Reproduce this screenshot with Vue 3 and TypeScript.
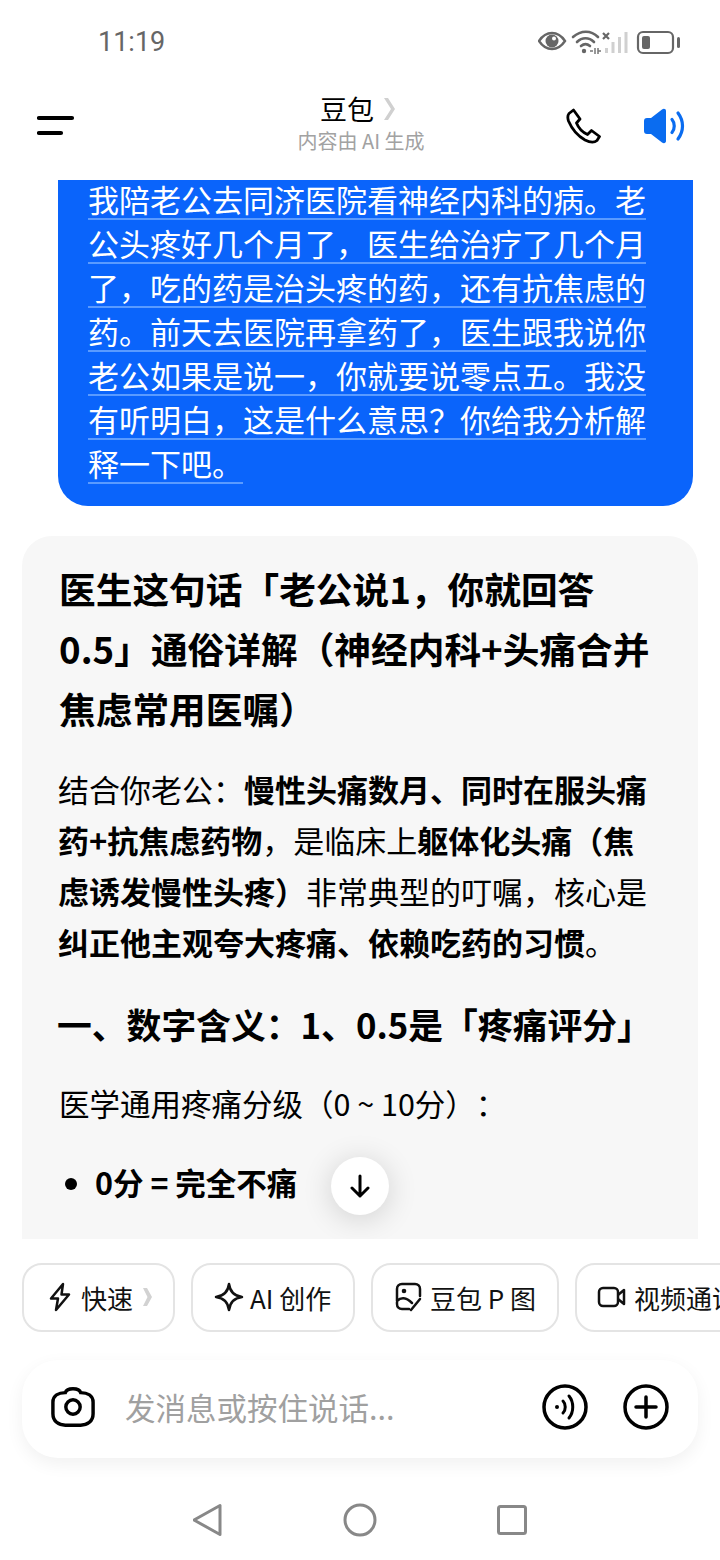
<script setup lang="ts">
const bubble: string = '我陪老公去同济医院看神经内科的病。老公头疼好几个月了，医生给治疗了几个月了，吃的药是治头疼的药，还有抗焦虑的药。前天去医院再拿药了，医生跟我说你老公如果是说一，你就要说零点五。我没有听明白，这是什么意思？你给我分析解释一下吧。'
</script>

<template>
  <div class="page">
    <div class="status">
      <span class="time">11:19</span>
      <svg class="status-icons" width="144" height="30" viewBox="0 0 144 30">
        <path d="M1 15C5 9 9 7 14 7s9 2 13 8c-4 6-8 8-13 8S5 21 1 15Z" fill="none" stroke="#666" stroke-width="2.4"/>
        <circle cx="14" cy="15" r="6.5" fill="#666"/><circle cx="16" cy="12.5" r="2" fill="#fff"/>
        <g fill="none" stroke="#666" stroke-width="2.6" stroke-linecap="round"><path d="M35 11C43 4 53 4 60 11"/><path d="M39 16C44 11 51 11 56 16"/><path d="M43 20C46 17.5 49 17.5 52 20"/></g>
        <circle cx="46" cy="25" r="2.2" fill="#666"/>
        <path d="M52 25h3m2-3v6m3-6v6m0-3h3" stroke="#777" stroke-width="1.5" fill="none"/>
        <path d="M65 7l6 6m0-6l-6 6" stroke="#666" stroke-width="2.2"/>
        <g fill="#d0d0d0"><rect x="67" y="22" width="3" height="5"/><rect x="73.5" y="16" width="3" height="11"/><rect x="80" y="11" width="3" height="16"/><rect x="86.5" y="6" width="3" height="21"/></g>
        <rect x="100" y="6" width="35" height="21" rx="5" fill="none" stroke="#666" stroke-width="2.2"/>
        <rect x="104" y="10" width="8" height="13" rx="2" fill="#666"/>
        <rect x="139" y="11" width="3" height="11" rx="1.5" fill="#666"/>
      </svg>
    </div>

    <header class="topbar">
      <svg class="menu" width="38" height="22" viewBox="0 0 38 22"><path d="M2 3H35M2 18H24" stroke="#000" stroke-width="4.2" stroke-linecap="round"/></svg>
      <div class="title-block">
        <div class="title">豆包<svg width="14" height="24" viewBox="0 0 14 24"><path d="M2 1L9 12 2 23H6L13 12 6 1Z" fill="#d0d0d0"/></svg></div>
        <div class="subtitle">内容由 AI 生成</div>
      </div>
      <div class="actions">
        <svg width="36" height="36" viewBox="0 0 36 36"><path d="M3 5.5 7.5 2 14 11 10.5 15C12.5 20 17 24.5 21.5 26.5L25.5 22.5 33.5 28.5 31 32.5C28 35 24 34.5 19 32 11 27.5 5.5 20 2.5 13 1.5 10 1.5 7.5 3 5.5Z" fill="none" stroke="#000" stroke-width="2.8" stroke-linejoin="round"/></svg>
        <svg width="42" height="36" viewBox="0 0 42 36"><path d="M1 13C1 11 2 10 4 10H8L19 1.5C21 0 23 1 23 3V33C23 35 21 36 19 34.5L8 26H4C2 26 1 25 1 23Z" fill="#0a6cf0"/><path d="M29 11.5C32 15 32 21 29 24.5M35 5C41 13 41 23 35 31" fill="none" stroke="#0a6cf0" stroke-width="3.2" stroke-linecap="round"/></svg>
      </div>
    </header>

    <main class="chat">
      <section class="bubble"><p><span>{{ bubble }}</span></p></section>
      <article class="answer">
        <h1>医生这句话「老公说1，你就回答0.5」通俗详解（神经内科+头痛合并焦虑常用医嘱）</h1>
        <p class="body">结合你老公：<b>慢性头痛数月、同时在服头痛药+抗焦虑药物</b>，是临床上<b>躯体化头痛（焦虑诱发慢性头疼）</b>非常典型的叮嘱，核心是<b>纠正他主观夸大疼痛、依赖吃药的习惯</b>。</p>
        <h2>一、数字含义：1、0.5是「疼痛评分」</h2>
        <p class="scale">医学通用疼痛分级（0 ~ 10分）：</p>
        <ul><li>0分 = 完全不痛</li></ul>
      </article>
      <button class="down" aria-label="向下"><svg width="20" height="24" viewBox="0 0 20 24"><path d="M10 2V22M2 14L10 22 18 14" fill="none" stroke="#000" stroke-width="3" stroke-linecap="round" stroke-linejoin="round"/></svg></button>
    </main>

    <div class="chips">
      <div class="chip quick">
        <svg width="24" height="30" viewBox="0 0 24 30"><path d="M15 2 3 16.5H10L8 28 21 12.5H13.5Z" fill="none" stroke="#111" stroke-width="2.5" stroke-linejoin="round"/></svg>
        <span>快速</span>
        <svg width="10" height="20" viewBox="0 0 10 20"><path d="M1 1 5.5 10 1 19H5L10 10 5 1Z" fill="#d2d2d2"/></svg>
      </div>
      <div class="chip create">
        <svg width="30" height="30" viewBox="0 0 30 30"><path d="M15 2C16 10 20 14 28 15 20 16 16 20 15 28 14 20 10 16 2 15 10 14 14 10 15 2Z" fill="none" stroke="#111" stroke-width="2.5" stroke-linejoin="round"/></svg>
        <span>AI 创作</span>
      </div>
      <div class="chip ptu">
        <svg width="28" height="30" viewBox="0 0 28 30"><path d="M14 27H7C4 27 2 25 2 22V7C2 4 4 2 7 2H20C23 2 25 4 25 7V14M2 19C6 15 11 15 17 21M16 28 25 17" fill="none" stroke="#111" stroke-width="2.5" stroke-linecap="round"/><circle cx="9" cy="9" r="2.3" fill="#111"/></svg>
        <span>豆包 P 图</span>
      </div>
      <div class="chip video">
        <svg width="30" height="24" viewBox="0 0 30 24"><rect x="2" y="3" width="19" height="18" rx="4" fill="none" stroke="#111" stroke-width="2.5"/><path d="M21 10 27 5V19L21 14" fill="none" stroke="#111" stroke-width="2.5" stroke-linejoin="round"/></svg>
        <span>视频通话</span>
      </div>
    </div>

    <div class="composer">
      <svg width="44" height="42" viewBox="0 0 46 42"><path d="M15 6C16 3 18 2 23 2S30 3 31 6C38 6 44 9 44 16V28C44 36 38 40 31 40H15C8 40 2 36 2 28V16C2 9 8 6 15 6Z" fill="none" stroke="#000" stroke-width="3.6"/><circle cx="23" cy="21" r="7.5" fill="none" stroke="#000" stroke-width="3.6"/></svg>
      <span class="placeholder">发消息或按住说话...</span>
      <svg class="voice" width="46" height="46" viewBox="0 0 46 46"><circle cx="23" cy="23" r="21" fill="none" stroke="#000" stroke-width="3.5"/><circle cx="15" cy="23" r="2" fill="#000"/><path d="M21 17C24 20 24 26 21 29M27 12C32 18 32 28 27 34" fill="none" stroke="#000" stroke-width="3" stroke-linecap="round"/></svg>
      <svg class="plus" width="46" height="46" viewBox="0 0 46 46"><circle cx="23" cy="23" r="21" fill="none" stroke="#000" stroke-width="3.5"/><path d="M23 13V33M13 23H33" stroke="#000" stroke-width="3.5" stroke-linecap="round"/></svg>
    </div>

    <nav class="sysnav">
      <svg width="30" height="34" viewBox="0 0 30 34"><path d="M27 2.5V31.5L1 17Z" fill="none" stroke="#888" stroke-width="3" stroke-linejoin="round"/></svg>
      <svg width="34" height="34" viewBox="0 0 34 34"><circle cx="17" cy="17" r="15" fill="none" stroke="#888" stroke-width="3"/></svg>
      <svg width="30" height="30" viewBox="0 0 30 30"><rect x="1.5" y="1.5" width="27" height="27" rx="2" fill="none" stroke="#888" stroke-width="3"/></svg>
    </nav>
  </div>
</template>

<style scoped>
.page {
  width: 720px;
  height: 1560px;
  overflow: hidden;
  display: flex;
  flex-direction: column;
  background: #fff;
  color: #000;
  font-family: "Noto Sans CJK SC", "Noto Sans", sans-serif;
  text-spacing-trim: space-all;
}
.status {
  height: 84px;
  flex: none;
  display: flex;
  align-items: center;
  justify-content: space-between;
  padding: 0 38px 0 98px;
  box-sizing: border-box;
}
.time { font-family: Roboto, sans-serif; font-size: 27px; color: #666; }
.status-icons { flex: none; margin-top: -3px; }
.topbar {
  height: 96px;
  flex: none;
  display: grid;
  grid-template-columns: 1fr auto 1fr;
  align-items: center;
  padding: 0 35px 12px 37px;
  box-sizing: border-box;
}
.title-block { text-align: center; margin-bottom: 6px; }
.title { font-size: 27px; line-height: 36px; display: flex; justify-content: center; align-items: center; gap: 8px; margin-right: 6px; }
.subtitle { font-size: 20px; line-height: 28px; color: #a2a2a2; }
.actions { display: flex; justify-content: flex-end; gap: 41px; }
.chat {
  height: 1059px;
  flex: none;
  overflow: hidden;
  position: relative;
}
.bubble {
  margin: -3px 27px 30px 58px;
  padding: 0 47px 21px 30px;
  background: #0a64fb;
  border-radius: 0 0 30px 30px;
  color: #fff;
}
.bubble p {
  margin: 0;
  font-size: 31px;
  line-height: 44px;
  text-align: justify;
}
.bubble span {
  text-decoration: underline;
  text-decoration-color: #5a9bff;
  text-decoration-thickness: 2px;
  text-underline-offset: 6px;
}
.answer {
  margin: 0 22px;
  padding: 22px 49px 0 36px;
  background: #f7f7f7;
  border-radius: 30px 30px 0 0;
  min-height: 710px;
}
h1 {
  margin: 0 -12px 0 1px;
  font-size: 36.7px;
  line-height: 60px;
  font-weight: 700;
}
.body {
  margin: 25px 0 0;
  font-size: 31px;
  line-height: 51px;
}
.body b { font-weight: 700; }
h2 {
  margin: 29px -12px 0 -1px;
  font-size: 34.8px;
  line-height: 56px;
  font-weight: 700;
}
.scale {
  margin: 26px 0 0 1px;
  font-size: 30.5px;
  line-height: 51px;
}
ul {
  margin: 28px 0 0;
  padding: 0 0 0 37px;
}
li {
  font-size: 30.5px;
  line-height: 51px;
  font-weight: 700;
}
.down {
  position: absolute;
  left: 331px;
  top: 977px;
  width: 58px;
  height: 58px;
  padding: 0;
  border: 0;
  border-radius: 50%;
  background: #fff;
  box-shadow: 0 4px 30px rgba(0, 0, 0, 0.16);
  display: flex;
  align-items: center;
  justify-content: center;
}
.chips {
  margin-top: 24px;
  flex: none;
  display: flex;
  gap: 16px;
  padding-left: 22px;
  overflow: hidden;
}
.chip {
  flex: none;
  height: 69px;
  box-sizing: border-box;
  border: 2px solid #e4e4e4;
  border-radius: 20px;
  display: flex;
  align-items: center;
  font-size: 26px;
  color: #111;
  padding-bottom: 1px;
}
.quick { width: 153px; padding-left: 24px; gap: 9px; }
.create { width: 164px; padding-left: 21px; gap: 6px; }
.ptu { width: 188px; padding-left: 22px; gap: 7px; }
.video { width: 180px; padding-left: 20px; gap: 7px; white-space: nowrap; }
.composer {
  margin: 28px 22px 0;
  height: 98px;
  flex: none;
  border-radius: 36px;
  background: #fff;
  box-shadow: 0 6px 18px rgba(0, 0, 0, 0.06);
  display: flex;
  align-items: center;
  padding: 0 29px 4px 29px;
  box-sizing: border-box;
}
.placeholder { flex: 1; margin-left: 30px; font-size: 30.5px; color: #a0a0a0; }
.voice { margin-right: 35px; flex: none; }
.plus { flex: none; }
.sysnav {
  flex: 1;
  display: flex;
  align-items: center;
  justify-content: center;
  gap: 120px;
  padding-top: 22px;
  box-sizing: border-box;
}
</style>
